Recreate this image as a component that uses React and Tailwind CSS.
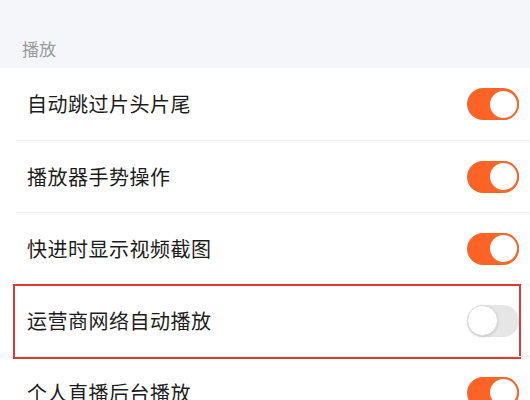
import React from 'react';

const ROWS = [
  { label: '自动跳过片头片尾', on: true },
  { label: '播放器手势操作', on: true },
  { label: '快进时显示视频截图', on: true },
  { label: '运营商网络自动播放', on: false, marked: true },
  { label: '个人直播后台播放', on: true },
];

const Toggle = ({ on }) =>
  on ? (
    <div className="w-[52px] h-[32px] rounded-full bg-[#fe6326] flex items-center justify-end">
      <div className="w-[31px] h-[31px] rounded-full bg-white border-[2px] border-[#f06a32]" />
    </div>
  ) : (
    <div className="w-[52px] h-[32px] rounded-full bg-[#e6e6e6] flex items-center justify-start">
      <div className="w-[31px] h-[31px] rounded-full bg-white border border-[#dcdcdc] shadow-sm" />
    </div>
  );

const Row = ({ label, on, marked, first }) => (
  <div className="relative">
    <div className={`ml-4 h-[72px] flex items-center justify-between pl-[11px] pr-[11px] ${first ? '' : 'border-t border-[#f0f1f3]'}`}>
      <span className="text-[20px] text-[#1c1c1c] tracking-[0.5px]">{label}</span>
      <Toggle on={on} />
    </div>
    {marked && (
      <div className="absolute left-[13px] right-[9px] top-0 h-[75px] border-2 border-[#d83a34] pointer-events-none" />
    )}
  </div>
);

export default function App() {
  return (
    <div
      className="w-[530px] h-[400px] overflow-hidden bg-white"
      style={{ fontFamily: '"Noto Sans CJK SC", "Noto Sans", sans-serif' }}
    >
      <div className="h-[68px] bg-[#f4f6f9] flex items-end pl-[22px] pb-[7px]">
        <span className="text-[17px] text-[#9a9a9a]">播放</span>
      </div>
      {ROWS.map((r, i) => (
        <Row key={r.label} {...r} first={i === 0} />
      ))}
    </div>
  );
}
